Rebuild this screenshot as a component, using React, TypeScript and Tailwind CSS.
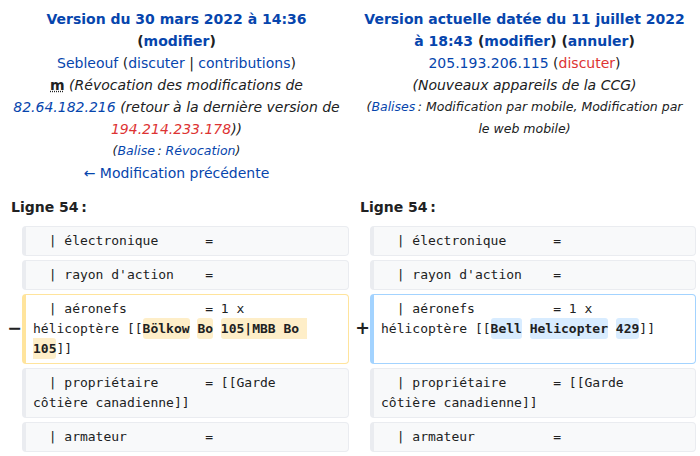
import React from 'react';

const link = 'text-[#0645ad]';
const red = 'text-[#d33]';

type Kind = 'context' | 'deleted' | 'added';

const boxStyles: Record<Kind, string> = {
  context: 'border-[#eaecf0] bg-[#f8f9fa]',
  deleted: 'border-[#ffe49c] bg-white',
  added: 'border-[#a3d3ff] bg-white',
};

const Cell = ({ kind, children }: { kind: Kind; children: React.ReactNode }) => (
  <div
    className={`rounded-[4px] border border-l-4 py-[4px] pl-[7px] pr-[12px] whitespace-pre-wrap break-words font-['DejaVu_Sans_Mono',monospace] text-[13px] leading-[20px] ${boxStyles[kind]}`}
  >
    {children}
  </div>
);

const Marker = ({ sign }: { sign?: string }) => (
  <div className="flex items-center justify-end text-[17.5px] font-bold leading-none">{sign}</div>
);

const Del = ({ children }: { children: React.ReactNode }) => (
  <span className="rounded-[3px] bg-[#feeec8] py-[3px] font-bold">{children}</span>
);

const Ins = ({ children }: { children: React.ReactNode }) => (
  <span className="rounded-[3px] bg-[#d8ecff] py-[3px] font-bold">{children}</span>
);

const DiffRow = ({
  left,
  right,
  leftKind = 'context',
  rightKind = 'context',
  leftSign,
  rightSign,
}: {
  left: React.ReactNode;
  right: React.ReactNode;
  leftKind?: Kind;
  rightKind?: Kind;
  leftSign?: string;
  rightSign?: string;
}) => (
  <div className="grid grid-cols-[22px_327px_21px_326px]">
    <Marker sign={leftSign} />
    <Cell kind={leftKind}>{left}</Cell>
    <Marker sign={rightSign} />
    <Cell kind={rightKind}>{right}</Cell>
  </div>
);

export default function App() {
  return (
    <div className="w-[700px] h-[456px] overflow-hidden bg-white text-[#202122] font-['DejaVu_Sans',sans-serif] text-[14px]">
      {/* revision headers */}
      <div className="grid grid-cols-[349px_347px] pt-[8px] text-center leading-[22px]">
        <div className="pl-[12px] pr-[8px]">
          <div className="font-bold">
            <a className={link}>Version du 30 mars 2022 à 14:36</a> (<a className={link}>modifier</a>)
          </div>
          <div>
            <a className={link}>Sebleouf</a> (<a className={link}>discuter</a> | <a className={link}>contributions</a>)
          </div>
          <div>
            <abbr className="font-bold underline decoration-dotted">m</abbr>{' '}
            <span className="italic">
              (Révocation des modifications de <a className={link}>82.64.182.216</a> (retour à la dernière version de{' '}
              <a className={red}>194.214.233.178</a>))
            </span>
          </div>
          <div className="text-[12.5px] italic">
            (<a className={link}>Balise</a>{'\u202f'}: <a className={link}>Révocation</a>)
          </div>
          <div>
            <a className={link}>← Modification précédente</a>
          </div>
        </div>
        <div className="pl-[12px] pr-[8px]">
          <div className="font-bold">
            <a className={link}>Version actuelle datée du 11 juillet 2022 à 18:43</a> (<a className={link}>modifier</a>) (
            <a className={link}>annuler</a>)
          </div>
          <div>
            <a className={link}>205.193.206.115</a> (<a className={red}>discuter</a>)
          </div>
          <div className="italic">(Nouveaux appareils de la CCG)</div>
          <div className="text-[12.5px] italic">
            (<a className={link}>Balises</a>{'\u202f'}: Modification par mobile, Modification par le web mobile)
          </div>
        </div>
      </div>

      {/* line numbers */}
      <div className="mt-[12px] grid grid-cols-[349px_347px] font-bold leading-[22px]">
        <div className="pl-[11px]">Ligne 54{'\u202f'}:</div>
        <div className="pl-[11px]">Ligne 54{'\u202f'}:</div>
      </div>

      {/* diff body */}
      <div className="mt-[8px] flex flex-col gap-[4px]">
        <DiffRow left={'  | électronique      = '} right={'  | électronique      = '} />
        <DiffRow left={"  | rayon d'action    = "} right={"  | rayon d'action    = "} />
        <DiffRow
          leftKind="deleted"
          rightKind="added"
          leftSign="−"
          rightSign="+"
          left={
            <>
              {'  | aéronefs          = 1 x hélicoptère [['}
              <Del>Bölkow</Del> <Del>Bo</Del> <Del>105|MBB Bo 105</Del>
              {']]'}
            </>
          }
          right={
            <>
              {'  | aéronefs          = 1 x hélicoptère [['}
              <Ins>Bell</Ins> <Ins>Helicopter</Ins> <Ins>429</Ins>
              {']]'}
            </>
          }
        />
        <DiffRow
          left={'  | propriétaire      = [[Garde côtière canadienne]]'}
          right={'  | propriétaire      = [[Garde côtière canadienne]]'}
        />
        <DiffRow left={'  | armateur          = '} right={'  | armateur          = '} />
      </div>
    </div>
  );
}
